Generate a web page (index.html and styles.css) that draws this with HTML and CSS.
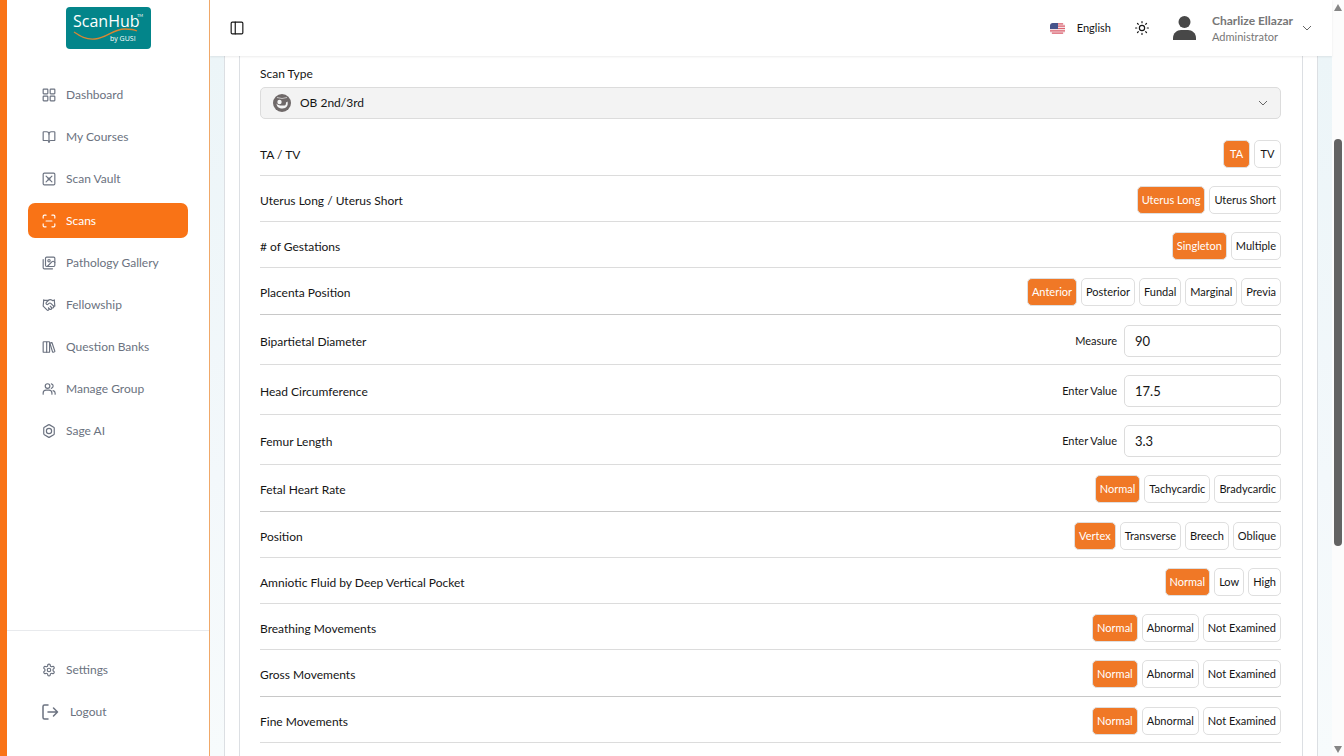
FILE: index.html
```html
<!DOCTYPE html>
<html lang="en">
<head>
    <meta charset="UTF-8">
    <meta name="viewport" content="width=device-width, initial-scale=1.0">
    <title>Scans - ScanHub</title>
    <link rel="stylesheet" href="styles.css">
</head>
<body>
    <aside class="sidebar">
        <a href="#" class="logo">
            <svg width="85" height="42" viewBox="0 0 85 42">
                <rect width="85" height="42" rx="4" fill="#03858a"/>
                <text x="7" y="20" class="logo-name">ScanHub</text>
                <text x="71" y="10" class="logo-tm">TM</text>
                <path d="M8 25 C14 29 20 33 29 32 C41 31 47 22 59 22 C64 22 67 22 71 24" fill="none" stroke="#d98632" stroke-width="1.3"/>
                <text x="44" y="34" class="logo-by">by GUSI</text>
            </svg>
        </a>
        <nav class="menu">
            <a href="#" class="menu-item">
                <svg class="icon" viewBox="0 0 24 24"><rect x="2" y="2" width="8" height="8" rx="1"/><rect x="14" y="2" width="8" height="8" rx="1"/><rect x="14" y="14" width="8" height="8" rx="1"/><rect x="2" y="14" width="8" height="8" rx="1"/></svg>
                Dashboard
            </a>
            <a href="#" class="menu-item">
                <svg class="icon" viewBox="0 0 24 24"><path d="M12 7v14"/><path d="M3 18a1 1 0 0 1-1-1V4a1 1 0 0 1 1-1h5a4 4 0 0 1 4 4 4 4 0 0 1 4-4h5a1 1 0 0 1 1 1v13a1 1 0 0 1-1 1h-6a3 3 0 0 0-3 3 3 3 0 0 0-3-3z"/></svg>
                My Courses
            </a>
            <a href="#" class="menu-item">
                <svg class="icon" viewBox="0 0 24 24"><rect x="2" y="2" width="20" height="20" rx="2"/><circle cx="12" cy="12" r="1.500"/><path d="M7 7l3.500 3.500M17 7l-3.500 3.500M7 17l3.500-3.500M17 17l-3.500-3.500"/></svg>
                Scan Vault
            </a>
            <a href="#" class="menu-item active">
                <svg class="icon" viewBox="0 0 24 24"><path d="M2 7V4a2 2 0 0 1 2-2h3"/><path d="M17 2h3a2 2 0 0 1 2 2v3"/><path d="M22 17v3a2 2 0 0 1-2 2h-3"/><path d="M7 22H4a2 2 0 0 1-2-2v-3"/><path d="M7 12h10"/></svg>
                Scans
            </a>
            <a href="#" class="menu-item">
                <svg class="icon" viewBox="0 0 24 24"><rect x="6" y="2" width="16" height="16" rx="2"/><path d="M18 22H4a2 2 0 0 1-2-2V6"/><path d="m22 11-1.300-1.300a2.400 2.400 0 0 0-3.400 0L9 18"/><circle cx="12" cy="8" r="2"/></svg>
                Pathology Gallery
            </a>
            <a href="#" class="menu-item">
                <svg class="icon" viewBox="0 0 24 24"><path d="m11 17 2 2a1 1 0 1 0 3-3"/><path d="m14 14 2.500 2.500a1 1 0 1 0 3-3l-3.880-3.880a3 3 0 0 0-4.240 0l-.88.88a1 1 0 1 1-3-3l2.810-2.810a5.790 5.790 0 0 1 7.060-.87l.47.28a2 2 0 0 0 1.420.25L21 4"/><path d="m21 3 1 11h-2"/><path d="M3 3 2 14l6.500 6.500a1 1 0 1 0 3-3"/><path d="M3 4h8"/></svg>
                Fellowship
            </a>
            <a href="#" class="menu-item">
                <svg class="icon" viewBox="0 0 24 24"><rect x="2" y="3" width="6" height="18" rx="1"/><path d="M8 4a1 1 0 0 1 1-1h3a1 1 0 0 1 1 1v16a1 1 0 0 1-1 1H8"/><path d="M13.500 5.500l2.500-1a1 1 0 0 1 1.300.600L22 19a1 1 0 0 1-.6 1.200l-2 .7a1 1 0 0 1-1.300-.600z"/></svg>
                Question Banks
            </a>
            <a href="#" class="menu-item">
                <svg class="icon" viewBox="0 0 24 24"><path d="M17 21v-2a5 5 0 0 0-5-5H7a5 5 0 0 0-5 5v2"/><circle cx="9.500" cy="7" r="4"/><path d="M22.500 21v-2a4.500 4.500 0 0 0-3.500-4.300"/><path d="M16 3.100a4 4 0 0 1 0 7.800"/></svg>
                Manage Group
            </a>
            <a href="#" class="menu-item">
                <svg class="icon" viewBox="0 0 24 24"><path d="M11 1.500a2 2 0 0 1 2 0l7 4a2 2 0 0 1 1 1.700v9.600a2 2 0 0 1-1 1.700l-7 4a2 2 0 0 1-2 0l-7-4a2 2 0 0 1-1-1.700V7.200a2 2 0 0 1 1-1.700z"/><circle cx="12" cy="12" r="4.500"/></svg>
                Sage AI
            </a>
        </nav>
        <nav class="menu menu-bottom">
            <a href="#" class="menu-item">
                <svg class="icon" viewBox="0 0 24 24"><path d="M12.220 2h-.44a2 2 0 0 0-2 2v.18a2 2 0 0 1-1 1.730l-.43.25a2 2 0 0 1-2 0l-.15-.08a2 2 0 0 0-2.730.73l-.22.38a2 2 0 0 0 .73 2.730l.15.1a2 2 0 0 1 1 1.720v.51a2 2 0 0 1-1 1.740l-.15.09a2 2 0 0 0-.73 2.730l.22.38a2 2 0 0 0 2.730.73l.15-.08a2 2 0 0 1 2 0l.43.25a2 2 0 0 1 1 1.730V20a2 2 0 0 0 2 2h.44a2 2 0 0 0 2-2v-.18a2 2 0 0 1 1-1.730l.43-.25a2 2 0 0 1 2 0l.15.08a2 2 0 0 0 2.730-.73l.22-.39a2 2 0 0 0-.73-2.730l-.15-.08a2 2 0 0 1-1-1.740v-.5a2 2 0 0 1 1-1.740l.15-.09a2 2 0 0 0 .73-2.730l-.22-.38a2 2 0 0 0-2.730-.73l-.15.08a2 2 0 0 1-2 0l-.43-.25a2 2 0 0 1-1-1.730V4a2 2 0 0 0-2-2z"/><circle cx="12" cy="12" r="3"/></svg>
                Settings
            </a>
            <a href="#" class="menu-item">
                <svg class="icon icon-logout" viewBox="0 0 18 18"><path d="M6 2H2.500A1.500 1.500 0 0 0 1 3.500v11A1.500 1.500 0 0 0 2.500 16H6M6 9h9.500M11.500 5l4 4-4 4"/></svg>
                Logout
            </a>
        </nav>
    </aside>

    <div class="page">
        <header class="topbar">
            <button type="button" class="icon-btn" aria-label="Toggle sidebar">
                <svg class="icon" viewBox="0 0 24 24"><rect x="2" y="2" width="20" height="20" rx="2"/><path d="M9 2v20"/></svg>
            </button>
            <div class="topbar-right">
                <button type="button" class="language">
                    <svg width="15" height="11" viewBox="0 0 15 11">
                        <rect width="15" height="11" rx="3" fill="#f5dfe2"/>
                        <path d="M2 .8h11M0 3.200h15M0 5.500h15M0 7.800h15M2 10.200h11" stroke="#dc6471" stroke-width="1.200"/>
                        <path d="M3 0h5v6H0V3a3 3 0 0 1 3-3z" fill="#46548b"/>
                    </svg>
                    English
                </button>
                <button type="button" class="icon-btn" aria-label="Theme">
                    <svg class="icon" viewBox="0 0 24 24"><circle cx="12" cy="12" r="4.500"/><path d="M12 1v2M12 21v2M4.200 4.200l1.400 1.400M18.400 18.400l1.400 1.400M1 12h2M21 12h2M5.600 18.400l-1.400 1.400M19.800 4.200l-1.400 1.400"/></svg>
                </button>
                <button type="button" class="account">
                    <svg width="23" height="24" viewBox="0 0 23 24" fill="#484848"><circle cx="11.500" cy="6" r="6"/><path d="M0 24v-2c0-5 4-8 8-8h7c4 0 8 3 8 8v2z"/></svg>
                    <span class="account-text">
                        <span class="account-name">Charlize Ellazar</span>
                        <span class="account-role">Administrator</span>
                    </span>
                    <svg class="chevron" viewBox="0 0 10 10"><path d="M1 3l4 4 4-4"/></svg>
                </button>
            </div>
        </header>

        <main class="content">
            <div class="panel">
                <form class="scan-form">
                    <label class="field-label" for="scanType">Scan Type</label>
                    <div class="select-box">
                        <svg class="scan-icon" viewBox="0 0 18 18"><circle cx="9" cy="9" r="9" fill="#6f6969"/><path d="M4 3.500q5 2 10 0" stroke="#ddd" stroke-width=".8" fill="none"/><circle cx="6.500" cy="8" r="2.200" fill="#f4f4f4"/><path d="M3.500 9.500c1 1.500 3 2 5 2h3c1 0 1.500-1 1.500-3l1.500-1c1 4-1 7-5 7-3.500 0-6-2-6-5z" fill="#f4f4f4"/></svg>
                        <select id="scanType">
                            <option>OB 2nd/3rd</option>
                        </select>
                        <svg class="chevron" viewBox="0 0 10 10"><path d="M1 3l4 4 4-4"/></svg>
                    </div>

                    <div class="row">
                        <span class="row-name">TA / TV</span>
                        <button type="button" class="option selected">TA</button>
                        <button type="button" class="option">TV</button>
                    </div>
                    <div class="row">
                        <span class="row-name">Uterus Long / Uterus Short</span>
                        <button type="button" class="option selected">Uterus Long</button>
                        <button type="button" class="option">Uterus Short</button>
                    </div>
                    <div class="row">
                        <span class="row-name"># of Gestations</span>
                        <button type="button" class="option selected">Singleton</button>
                        <button type="button" class="option">Multiple</button>
                    </div>
                    <div class="row row-end">
                        <span class="row-name">Placenta Position</span>
                        <button type="button" class="option selected">Anterior</button>
                        <button type="button" class="option">Posterior</button>
                        <button type="button" class="option">Fundal</button>
                        <button type="button" class="option">Marginal</button>
                        <button type="button" class="option">Previa</button>
                    </div>
                    <div class="row">
                        <span class="row-name">Bipartietal Diameter</span>
                        <label class="value-label" for="bpd">Measure</label>
                        <input type="text" id="bpd" class="value" value="90">
                    </div>
                    <div class="row">
                        <span class="row-name">Head Circumference</span>
                        <label class="value-label" for="hc">Enter Value</label>
                        <input type="text" id="hc" class="value" value="17.5">
                    </div>
                    <div class="row">
                        <span class="row-name">Femur Length</span>
                        <label class="value-label" for="fl">Enter Value</label>
                        <input type="text" id="fl" class="value" value="3.3">
                    </div>
                    <div class="row row-end">
                        <span class="row-name">Fetal Heart Rate</span>
                        <button type="button" class="option selected">Normal</button>
                        <button type="button" class="option">Tachycardic</button>
                        <button type="button" class="option">Bradycardic</button>
                    </div>
                    <div class="row">
                        <span class="row-name">Position</span>
                        <button type="button" class="option selected">Vertex</button>
                        <button type="button" class="option">Transverse</button>
                        <button type="button" class="option">Breech</button>
                        <button type="button" class="option">Oblique</button>
                    </div>
                    <div class="row">
                        <span class="row-name">Amniotic Fluid by Deep Vertical Pocket</span>
                        <button type="button" class="option selected">Normal</button>
                        <button type="button" class="option">Low</button>
                        <button type="button" class="option">High</button>
                    </div>
                    <div class="row">
                        <span class="row-name">Breathing Movements</span>
                        <button type="button" class="option selected">Normal</button>
                        <button type="button" class="option">Abnormal</button>
                        <button type="button" class="option">Not Examined</button>
                    </div>
                    <div class="row row-end">
                        <span class="row-name">Gross Movements</span>
                        <button type="button" class="option selected">Normal</button>
                        <button type="button" class="option">Abnormal</button>
                        <button type="button" class="option">Not Examined</button>
                    </div>
                    <div class="row">
                        <span class="row-name">Fine Movements</span>
                        <button type="button" class="option selected">Normal</button>
                        <button type="button" class="option">Abnormal</button>
                        <button type="button" class="option">Not Examined</button>
                    </div>
                </form>
            </div>
        </main>
    </div>

    <div class="scrollbar" aria-hidden="true">
        <svg width="8" height="7" viewBox="0 0 8 7"><path d="M4 0l4 7H0z" fill="#858585"/></svg>
        <div class="scroll-track">
            <div class="scroll-thumb"></div>
        </div>
        <svg width="8" height="7" viewBox="0 0 8 7"><path d="M4 7l4-7H0z" fill="#858585"/></svg>
    </div>
</body>
</html>
```

FILE: styles.css
```css
* {
    box-sizing: border-box;
}
body {
    font-family: Lato, "Liberation Sans", sans-serif;
    font-size: 12px;
    line-height: 18px;
    margin: 0;
    height: 100vh;
    display: flex;
    overflow: hidden;
    color: #151515;
    background-color: #fff;
}
a {
    color: inherit;
    text-decoration: none;
}
button, input, select {
    font: inherit;
    color: inherit;
    margin: 0;
}
button {
    background: none;
    border: none;
    padding: 0;
    cursor: pointer;
}
svg {
    display: block;
    flex-shrink: 0;
}
.icon {
    width: 14px;
    height: 14px;
    fill: none;
    stroke: currentColor;
    stroke-width: 2;
    stroke-linecap: round;
    stroke-linejoin: round;
}
.icon-logout {
    width: 18px;
    height: 18px;
    stroke-width: 1.5;
}
.chevron {
    width: 10px;
    height: 10px;
    fill: none;
    stroke: #666;
    stroke-width: 1;
}

/* Sidebar */
.sidebar {
    width: 210px;
    flex-shrink: 0;
    display: flex;
    flex-direction: column;
    border-left: 7px solid #f97316;
    border-right: 1px solid #f0a868;
    position: relative;
    z-index: 2;
}
.logo {
    align-self: center;
    padding: 7px 0 28px;
}
.logo-name {
    font: 16px "Open Sans", sans-serif;
    fill: #fff;
}
.logo-tm {
    font: 4px Lato, sans-serif;
    fill: #fff;
}
.logo-by {
    font: 7px "Open Sans", sans-serif;
    fill: #fff;
}
.menu {
    display: flex;
    flex-direction: column;
    gap: 7px;
    padding: 0 21px;
}
.menu-item {
    display: flex;
    align-items: center;
    gap: 10px;
    height: 35px;
    padding: 0 14px;
    border-radius: 7px;
    color: #6b7280;
}
.menu-item.active {
    background-color: #f97316;
    color: #fff;
}
.menu-bottom {
    margin-top: auto;
    padding-top: 21px;
    padding-bottom: 27px;
    border-top: 1px solid #e8eaed;
}

/* Top bar */
.page {
    flex: 1;
    min-width: 0;
    display: flex;
    flex-direction: column;
}
.topbar {
    display: flex;
    justify-content: space-between;
    align-items: center;
    flex-shrink: 0;
    height: 56px;
    padding: 0 20px;
    box-shadow: 0 1px 2px rgba(0, 0, 0, 0.08);
    z-index: 1;
}
.topbar-right {
    display: flex;
    align-items: center;
    gap: 24px;
}
.language {
    display: flex;
    align-items: center;
    gap: 12px;
    font-size: 11px;
}
.account {
    display: flex;
    align-items: center;
    text-align: left;
}
.account-text {
    display: flex;
    flex-direction: column;
    padding: 2px 9px 0 16px;
    line-height: 16px;
    color: #777;
}
.account-name {
    font-weight: bold;
}
.account-role {
    font-size: 11px;
}

/* Scan form */
.content {
    flex: 1;
    min-height: 0;
    padding: 0 14px;
    overflow: hidden;
    background: linear-gradient(#ecf5f8, #f3f8fb 60%, #f7fbfc);
}
.panel {
    min-height: 100%;
    padding: 0 14px;
    background-color: #fff;
    border: solid #dcdfe3;
    border-width: 0 1px;
}
.scan-form {
    min-height: calc(100vh - 56px);
    padding: 9px 21px 14px 20px;
    border: solid #dcdfe3;
    border-width: 0 1px;
}
.field-label {
    display: block;
    margin-bottom: 4px;
}
.select-box {
    display: flex;
    align-items: center;
    height: 32px;
    margin-bottom: 11px;
    position: relative;
}
.select-box select {
    width: 100%;
    height: 100%;
    padding: 0 39px;
    appearance: none;
    background-color: #f3f3f3;
    border: 1px solid #dcdcdc;
    border-radius: 5px;
}
.scan-icon {
    position: absolute;
    left: 13px;
    width: 18px;
    height: 18px;
}
.select-box .chevron {
    position: absolute;
    right: 13px;
}
.row {
    display: flex;
    align-items: center;
    gap: 4px;
    padding: 10px 0 7px;
    border-bottom: 1px solid #dcdcdc;
}
.row-end {
    padding-bottom: 8px;
    border-color: #c8c8c8;
}
.row-name {
    margin-right: auto;
    padding-top: 2px;
}
.option {
    min-width: 27px;
    height: 28px;
    padding: 0 4px;
    font-size: 11px;
    border: 1px solid #dfdfdf;
    border-radius: 5px;
}
.option.selected {
    background-color: #f07826;
    color: #fff;
}
.value-label {
    margin-right: 3px;
    font-size: 11px;
}
.value {
    width: 157px;
    height: 32px;
    padding: 0 10px;
    font-size: 13px;
    border: 1px solid #dcdcdc;
    border-radius: 5px;
}

/* Scrollbar */
.scrollbar {
    width: 12px;
    flex-shrink: 0;
    display: flex;
    flex-direction: column;
    align-items: center;
    padding: 4px 0 3px;
    background-color: #fcfcfc;
}
.scroll-track {
    flex: 1;
    display: grid;
    grid-template-rows: 128fr 407fr 200fr;
}
.scroll-thumb {
    grid-row: 2;
    width: 8px;
    background-color: #636363;
    border-radius: 4px;
}
```
